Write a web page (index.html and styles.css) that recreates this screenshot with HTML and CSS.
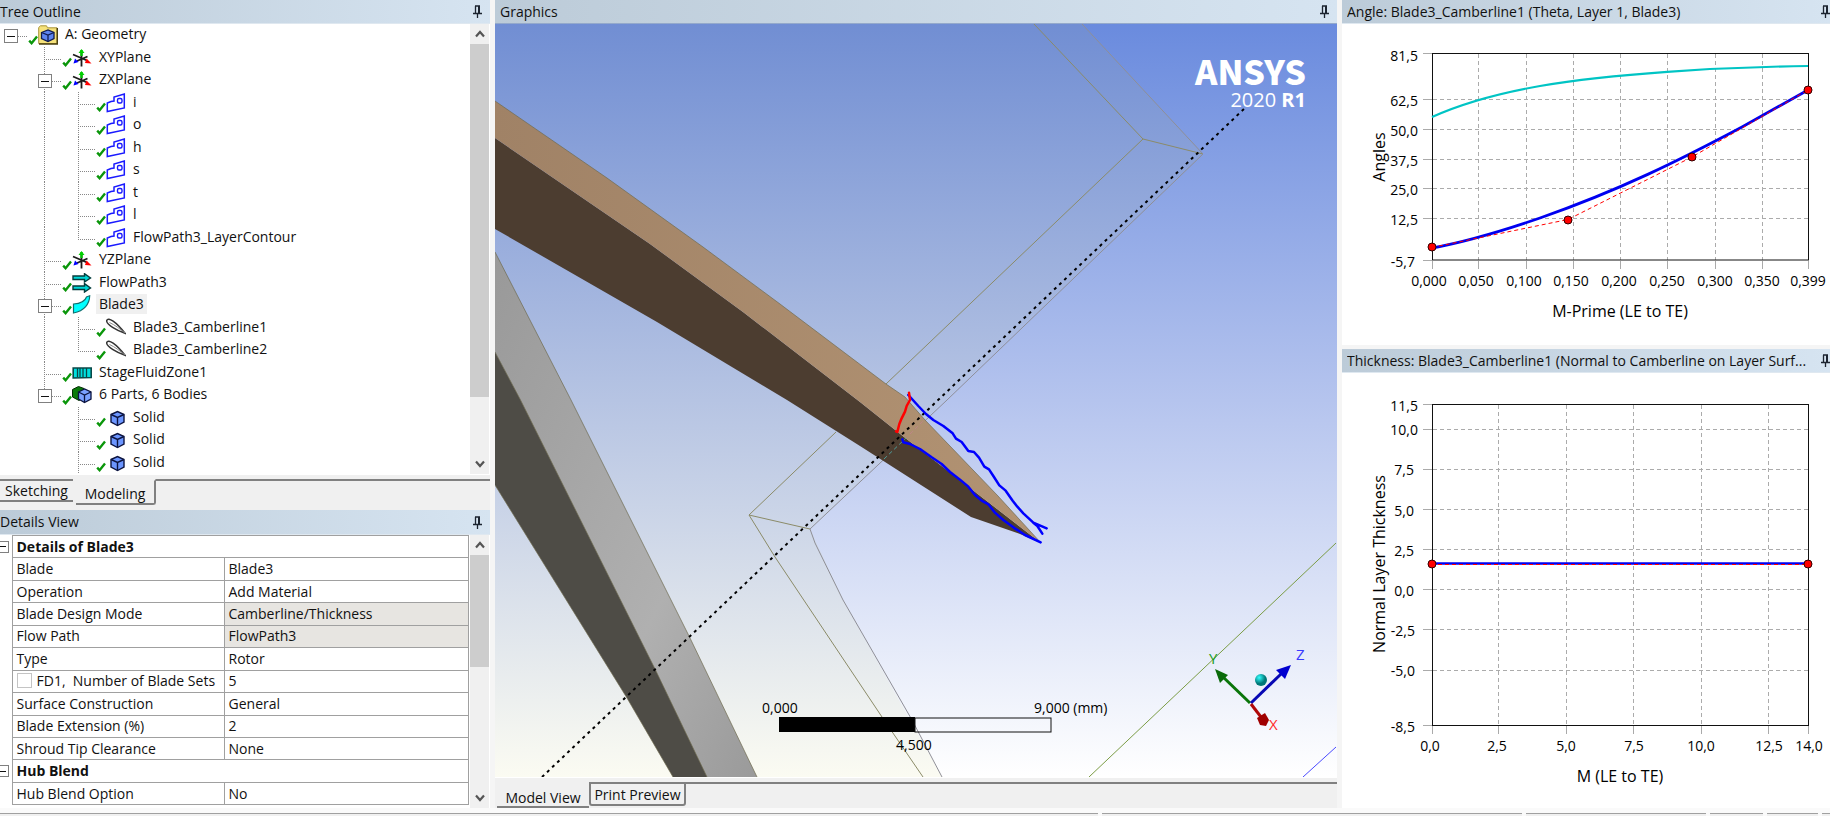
FILE: index.html
```html
<!DOCTYPE html>
<html lang="en">
<head>
<meta charset="utf-8">
<title>A: Geometry - DesignModeler</title>
<link rel="stylesheet" href="styles.css">
</head>
<body>
<svg class="defs" aria-hidden="true">
  <defs>
    <symbol id="check" viewBox="0 0 10 10"><path d="M1.2 5.6 3.6 8.2 9 1.6" fill="none" stroke="#0a960a" stroke-width="2.4"/></symbol>
    <symbol id="pin" viewBox="0 0 9 13"><path d="M2 1h5M2.5 1v7M0 8.5h9M4.5 9v4" fill="none" stroke="#1c2430" stroke-width="1.3"/><path d="M6 1v7" stroke="#1c2430" stroke-width="2"/></symbol>
    <symbol id="up" viewBox="0 0 10 10"><path d="M1 7.500 5 3l4 4.500" fill="none" stroke="#555" stroke-width="2.200"/></symbol>
    <symbol id="down" viewBox="0 0 10 10"><path d="M1 2.500 5 7l4-4.500" fill="none" stroke="#555" stroke-width="2.200"/></symbol>
    <symbol id="geometry" viewBox="0 0 20 20"><path d="M.700 18.500V2.500L2.500.8h6l1 2h9.500v15.700z" fill="#f6e27a" stroke="#a8953a"/><path d="M1 19h18.300V3" fill="none" stroke="#4b4010" stroke-width="1.400"/><path d="M3.500 7.500 10 5l6 2.500v6l-6 3-6.500-3z" fill="#5c84f0" stroke="#101c50" stroke-width="1.300"/><path d="M3.500 7.500 10 10l6-2.500M10 10v6.500" fill="none" stroke="#101c50" stroke-width="1.300"/></symbol>
    <symbol id="plane" viewBox="0 0 20 20"><path d="M9.500 5v13.500M1 6.500l14 6M15.500 8.500 5 13" stroke="#1c1c1c" stroke-width="1.800" fill="none"/><path d="M9.500 2v6" stroke="#00c800" stroke-width="2.400"/><path d="M6.500 5 9.500 1l3 4z" fill="#00d000"/><path d="m14.500 10.500 5 5-6.500-.5z" fill="#f00"/><path d="m1.500 15.500 1.500-5 3.500 3.500z" fill="#00f"/></symbol>
    <symbol id="sketch" viewBox="0 0 20 20"><path d="M1.300 18.500V10L5 8.500 8 8V4L18.300 1v14z" fill="#fff" stroke="#1a1aff" stroke-width="1.500"/><rect x="11.500" y="5.500" width="4.500" height="4.500" rx="1.500" fill="none" stroke="#1a1aff" stroke-width="1.400"/></symbol>
    <symbol id="flow" viewBox="0 0 20 20"><path d="M1 3h11.500V.7L18.500 5l-6 4V6.500H1zM1 13h11.500v-2.300l6 4.300-6 4v-2.500H1z" fill="#00d8d8" stroke="#063c3c" stroke-width="1.400"/></symbol>
    <symbol id="blade" viewBox="0 0 20 20"><path d="M1.500 18V9C9 8.500 13 6.500 14.500 2L17.700.8c-.2 8-5.200 15.200-16.200 17.200z" fill="#0ff" stroke="#107070" stroke-width="1.200"/></symbol>
    <symbol id="camber" viewBox="0 0 20 20"><path d="M.7 2.500c1.500-4 9.500 1.500 18.300 12.800C11 12.500 0 6.500.7 2.500z" fill="#fff" stroke="#333" stroke-width="1.500"/><path d="M3.500 4.500C9 7 14 11 19 15" fill="none" stroke="#888" stroke-width="1"/></symbol>
    <symbol id="fluid" viewBox="0 0 20 20"><path d="M1.200 5h18v9.500l-18 .5z" fill="#00dede" stroke="#084848" stroke-width="1.600"/><path d="M5.500 5v9M8 5v9M11 5v9M14.500 5v9" stroke="#084848" stroke-width="1.300"/></symbol>
    <symbol id="parts" viewBox="0 0 20 20"><path d="M.5 4.500 6.500 1.500 12 3.500v9l-5 3-6.500-3.500z" fill="#0a7a0a" stroke="#022c02"/><path d="m6.500 7 6-3 6.500 3v7l-6.500 3.500-6-3.500z" fill="#7aa0ff" stroke="#0c1440" stroke-width="1.300"/><path d="m6.500 7 6 3 6.500-3M12.500 10v7" fill="none" stroke="#0c1440" stroke-width="1.300"/></symbol>
    <symbol id="solid" viewBox="0 0 20 20"><path d="m5 6.500 6.500-3L18 6.500v7.500l-6.500 3.500L5 14z" fill="#6c96ff" stroke="#0c1440" stroke-width="1.400"/><path d="m5 6.500 6.500 3L18 6.500M11.500 9.500v8" fill="none" stroke="#0c1440" stroke-width="1.400"/></symbol>
  </defs>
</svg>

<div class="app">
  <main class="workspace">
    <div class="side">
      <section class="pane pane-tree">
        <header class="bar"><h2>Tree Outline</h2><button class="pin" aria-label="Pin Tree Outline"><svg><use href="#pin"/></svg></button></header>
        <div class="scroller">
          <ul class="tree">
            <li><span class="node root"><button class="toggle" aria-label="Collapse A: Geometry"></button></span><svg class="ok"><use href="#check"/></svg><svg class="icon"><use href="#geometry"/></svg><span class="label">A: Geometry</span></li>
            <li><span class="step"></span><span class="node"></span><svg class="ok"><use href="#check"/></svg><svg class="icon"><use href="#plane"/></svg><span class="label">XYPlane</span></li>
            <li><span class="step"></span><span class="node"><button class="toggle" aria-label="Collapse ZXPlane"></button></span><svg class="ok"><use href="#check"/></svg><svg class="icon"><use href="#plane"/></svg><span class="label">ZXPlane</span></li>
            <li><span class="step"></span><span class="step line"></span><span class="node"></span><svg class="ok"><use href="#check"/></svg><svg class="icon"><use href="#sketch"/></svg><span class="label">i</span></li>
            <li><span class="step"></span><span class="step line"></span><span class="node"></span><svg class="ok"><use href="#check"/></svg><svg class="icon"><use href="#sketch"/></svg><span class="label">o</span></li>
            <li><span class="step"></span><span class="step line"></span><span class="node"></span><svg class="ok"><use href="#check"/></svg><svg class="icon"><use href="#sketch"/></svg><span class="label">h</span></li>
            <li><span class="step"></span><span class="step line"></span><span class="node"></span><svg class="ok"><use href="#check"/></svg><svg class="icon"><use href="#sketch"/></svg><span class="label">s</span></li>
            <li><span class="step"></span><span class="step line"></span><span class="node"></span><svg class="ok"><use href="#check"/></svg><svg class="icon"><use href="#sketch"/></svg><span class="label">t</span></li>
            <li><span class="step"></span><span class="step line"></span><span class="node"></span><svg class="ok"><use href="#check"/></svg><svg class="icon"><use href="#sketch"/></svg><span class="label">l</span></li>
            <li><span class="step"></span><span class="step line"></span><span class="node last"></span><svg class="ok"><use href="#check"/></svg><svg class="icon"><use href="#sketch"/></svg><span class="label">FlowPath3_LayerContour</span></li>
            <li><span class="step"></span><span class="node"></span><svg class="ok"><use href="#check"/></svg><svg class="icon"><use href="#plane"/></svg><span class="label">YZPlane</span></li>
            <li><span class="step"></span><span class="node"></span><svg class="ok"><use href="#check"/></svg><svg class="icon"><use href="#flow"/></svg><span class="label">FlowPath3</span></li>
            <li><span class="step"></span><span class="node"><button class="toggle" aria-label="Collapse Blade3"></button></span><svg class="ok"><use href="#check"/></svg><svg class="icon"><use href="#blade"/></svg><span class="label selected">Blade3</span></li>
            <li><span class="step"></span><span class="step line"></span><span class="node"></span><svg class="ok"><use href="#check"/></svg><svg class="icon"><use href="#camber"/></svg><span class="label">Blade3_Camberline1</span></li>
            <li><span class="step"></span><span class="step line"></span><span class="node last"></span><svg class="ok"><use href="#check"/></svg><svg class="icon"><use href="#camber"/></svg><span class="label">Blade3_Camberline2</span></li>
            <li><span class="step"></span><span class="node"></span><svg class="ok"><use href="#check"/></svg><svg class="icon"><use href="#fluid"/></svg><span class="label">StageFluidZone1</span></li>
            <li><span class="step"></span><span class="node last"><button class="toggle" aria-label="Collapse 6 Parts, 6 Bodies"></button></span><svg class="ok"><use href="#check"/></svg><svg class="icon"><use href="#parts"/></svg><span class="label">6 Parts, 6 Bodies</span></li>
            <li><span class="step"></span><span class="step"></span><span class="node"></span><svg class="ok"><use href="#check"/></svg><svg class="icon"><use href="#solid"/></svg><span class="label">Solid</span></li>
            <li><span class="step"></span><span class="step"></span><span class="node"></span><svg class="ok"><use href="#check"/></svg><svg class="icon"><use href="#solid"/></svg><span class="label">Solid</span></li>
            <li><span class="step"></span><span class="step"></span><span class="node"></span><svg class="ok"><use href="#check"/></svg><svg class="icon"><use href="#solid"/></svg><span class="label">Solid</span></li>
          </ul>
          <div class="scrollbar"><button aria-label="Scroll up"><svg><use href="#up"/></svg></button><div class="track"><div class="thumb tree-thumb"></div></div><button aria-label="Scroll down"><svg><use href="#down"/></svg></button></div>
        </div>
      </section>
      <nav class="tabs side-tabs"><button class="tab">Sketching</button><button class="tab active">Modeling</button><span class="rule"></span></nav>
      <section class="pane pane-details">
        <header class="bar"><h2>Details View</h2><button class="pin" aria-label="Pin Details View"><svg><use href="#pin"/></svg></button></header>
        <div class="scroller">
          <table class="details">
            <colgroup><col class="c-gutter"><col class="c-name"><col></colgroup>
            <tbody>
              <tr><td class="gutter"><button class="fold" aria-label="Collapse Details of Blade3"></button></td><th colspan="2">Details of Blade3</th></tr>
              <tr><td class="gutter"></td><td>Blade</td><td>Blade3</td></tr>
              <tr><td class="gutter"></td><td>Operation</td><td>Add Material</td></tr>
              <tr><td class="gutter"></td><td>Blade Design Mode</td><td class="locked">Camberline/Thickness</td></tr>
              <tr><td class="gutter"></td><td>Flow Path</td><td class="locked">FlowPath3</td></tr>
              <tr><td class="gutter"></td><td>Type</td><td>Rotor</td></tr>
              <tr><td class="gutter"></td><td><label class="param"><input type="checkbox">FD1,&nbsp; Number of Blade Sets</label></td><td>5</td></tr>
              <tr><td class="gutter"></td><td>Surface Construction</td><td>General</td></tr>
              <tr><td class="gutter"></td><td>Blade Extension (%)</td><td>2</td></tr>
              <tr><td class="gutter"></td><td>Shroud Tip Clearance</td><td>None</td></tr>
              <tr><td class="gutter"><button class="fold" aria-label="Collapse Hub Blend"></button></td><th colspan="2">Hub Blend</th></tr>
              <tr><td class="gutter"></td><td>Hub Blend Option</td><td>No</td></tr>
            </tbody>
          </table>
          <div class="scrollbar"><button aria-label="Scroll up"><svg><use href="#up"/></svg></button><div class="track"><div class="thumb details-thumb"></div></div><button aria-label="Scroll down"><svg><use href="#down"/></svg></button></div>
        </div>
      </section>
    </div>

    <section class="pane center">
      <header class="bar bar-view"><h2>Graphics</h2><button class="pin" aria-label="Pin Graphics"><svg><use href="#pin"/></svg></button></header>
      <div class="view">
        <svg class="scene" viewBox="495 24 842 753" preserveAspectRatio="xMinYMin slice" role="img" aria-label="Blade model">
          <defs>
            <linearGradient id="sky" x1="0" y1="24" x2="0" y2="777" gradientUnits="userSpaceOnUse"><stop offset="0" stop-color="#6a8bde"/><stop offset=".5" stop-color="#b5c4ee"/><stop offset="1" stop-color="#fff"/></linearGradient>
            <linearGradient id="haze" x1="0" y1="24" x2="0" y2="777" gradientUnits="userSpaceOnUse"><stop offset="0" stop-color="#718ed3"/><stop offset=".5" stop-color="#b6c4e3"/><stop offset="1" stop-color="#fbfbf2"/></linearGradient>
            <linearGradient id="tan"><stop offset="0" stop-color="#a08266"/><stop offset="1" stop-color="#b29373"/></linearGradient>
            <linearGradient id="steel" x1="0" y1="0" x2="1" y2="1"><stop offset="0" stop-color="#999"/><stop offset=".65" stop-color="#b0b0b0"/><stop offset="1" stop-color="#9a9a9a"/></linearGradient>
            <radialGradient id="ball" cx=".35" cy=".3"><stop offset="0" stop-color="#3ff"/><stop offset="1" stop-color="#077"/></radialGradient>
          </defs>
          <rect x="495" y="24" width="842" height="753" fill="url(#sky)"/>
          <path d="M495 24h587l121 130L810 529l33 71 99 177H495z" fill="url(#haze)"/>
          <path d="M495 252 571 400 690 638 757 777H700L520 400 495 352z" fill="url(#steel)"/>
          <path d="M495 352 520.500 400 568 495 655 669 707 777H673L627 698 495 485z" fill="#4e4c46"/>
          <path d="M495 252 571 400 690 638 757 777M495 352 520.500 400 568 495 655 669 707 777M495 485 627 698 673 777" class="edge"/>
          <g class="wire">
            <path d="M1034 24 1143 139 886 384M836 432 749 515 810 529M1143 139 1203 154M749 515 775 557 882 717 923 777"/>
            <path class="faint" d="M1082 24 1203 154 947 400 810 529 815 543 843 600 912 720 942 777"/>
          </g>
          <path d="M495 138 650 244 743 312 860 402 904 437 970 488 1041 543 1020 534 971 517 860 446 787 400 657 322 495 229z" fill="#4c3d30"/>
          <path d="M495 101 607 178 703 247 780 304 886 384 905 397 925 420 998 496 1041 543 970 488 904 437 860 402 743 312 650 244 495 138z" fill="url(#tan)"/>
          <path d="M495 101 607 178 703 247 780 304 886 384 905 397 925 420 998 496 1041 543" class="edge"/>
          <path d="M884 459 906 438" class="hidden-edge"/><path d="M910 434 924 420" class="hidden-tan"/>
          <path d="M542 777 1246 107" class="axis"/>
          <g transform="translate(860 370) scale(.33333)" fill="none" stroke-width="7.500" stroke-linecap="round" stroke-linejoin="round">
            <path stroke="#00f" d="M145 75 175 108 198 132 220 150 250 168 278 190 288 206 305 216 325 243 342 246 357 263 373 290 387 298 400 318 418 346 437 362 458 392 472 410 490 430 520 458 560 475M520 458 532 468 547 491"/>
            <path stroke="#00f" d="M127 208 130 217 150 222 180 237 215 262 245 282 270 306 300 329 325 350 345 375 365 392 385 403 405 428 430 450 460 472 495 495 542 517"/>
            <path stroke="#f00" d="M147 68 150 90 140 108 135 125 125 145 118 162 112 186 108 184"/>
          </g>
          <path d="M1336 543 1089 777" stroke="#7b9c45" fill="none"/>
          <path d="M1336 747 1303 777" stroke="#4a4aff" fill="none"/>
          <rect x="779" y="717" width="136" height="15"/>
          <rect x="915" y="718" width="136" height="14" fill="none" stroke="#111"/>
          <text x="762" y="713" class="scale">0,000</text>
          <text x="1034" y="713" class="scale">9,000 (mm)</text>
          <text x="896" y="750" class="scale">4,500</text>
          <path d="M1250 703 1222 676" stroke="#0a750a" stroke-width="3"/><path d="m1215 669 13 6-8 8z" fill="#0a6a0a"/>
          <path d="m1251 703 30-29" stroke="#0808b4" stroke-width="3"/><path d="m1291 665-6 14-9-9z" fill="#0000d0"/>
          <path d="m1251 704 10 13" stroke="#b00808" stroke-width="3"/><path d="m1257 718 8-5 4 7-3 6-6-1z" fill="#a00000"/>
          <circle cx="1261" cy="680" r="6" fill="url(#ball)"/>
          <text x="1209" y="664" class="triad" fill="#1a9c1a">Y</text>
          <text x="1296" y="660" class="triad" fill="#3a3aff">Z</text>
          <text x="1269" y="730" class="triad" fill="#ff2a2a">X</text>
          <text x="1306" y="85" class="brand">ANSYS</text>
          <text x="1306" y="107" class="release">2020 <tspan class="strong">R1</tspan></text>
        </svg>
      </div>
      <nav class="tabs view-tabs"><button class="tab active">Model View</button><button class="tab boxed">Print Preview</button><span class="rule"></span></nav>
    </section>

    <div class="charts">
      <section class="pane">
        <header class="bar"><h2>Angle: Blade3_Camberline1 (Theta, Layer 1, Blade3)</h2><button class="pin" aria-label="Pin Angle"><svg><use href="#pin"/></svg></button></header>
        <svg class="chart" viewBox="1342 24 488 321" role="img" aria-label="Angles against M-Prime">
          <path class="grid" d="M1478.500 54v206M1526.500 54v206M1573.500 54v206M1620.500 54v206M1667.500 54v206M1715.500 54v206M1762.500 54v206M1433 99.500h375M1433 129.500h375M1433 159.500h375M1433 188.500h375M1433 218.500h375"/>
          <path class="tick" d="M1423 53.500h9M1423 99.500h9M1423 129.500h9M1423 159.500h9M1423 188.500h9M1423 218.500h9M1423 260.500h9M1432.500 261v8M1478.500 261v8M1526.500 261v8M1573.500 261v8M1620.500 261v8M1667.500 261v8M1715.500 261v8M1762.500 261v8M1808.500 261v8"/>
          <rect class="frame" x="1432.500" y="53.500" width="376" height="206.500"/>
          <path d="M1432 117C1461 104 1500 93 1540 86 1610 74 1720 67 1808 66" fill="none" stroke="#00c4c4" stroke-width="2.200"/>
          <path d="M1432 248C1465 242 1505 230 1540 218 1620 190 1680 160 1742 127L1808 90" fill="none" stroke="#0000f0" stroke-width="2.800"/>
          <path class="control" d="M1432 247.500 1568 219.500 1692 157 1808 90"/>
          <g class="handle"><circle cx="1432" cy="247" r="4"/><circle cx="1568" cy="220" r="4"/><circle cx="1692" cy="157" r="4"/><circle cx="1808" cy="90" r="4"/></g>
          <g class="num end"><text x="1418" y="61">81,5</text><text x="1418" y="106">62,5</text><text x="1418" y="136">50,0</text><text x="1418" y="166">37,5</text><text x="1418" y="195">25,0</text><text x="1418" y="225">12,5</text><text x="1415" y="267">-5,7</text></g>
          <g class="num mid"><text x="1429" y="286">0,000</text><text x="1476" y="286">0,050</text><text x="1524" y="286">0,100</text><text x="1571" y="286">0,150</text><text x="1619" y="286">0,200</text><text x="1667" y="286">0,250</text><text x="1715" y="286">0,300</text><text x="1762" y="286">0,350</text><text x="1808" y="286">0,399</text></g>
          <text class="axis-title" x="1620" y="317">M-Prime (LE to TE)</text>
          <text class="axis-title" transform="translate(1385 157) rotate(-90)">Angles</text>
        </svg>
      </section>
      <section class="pane">
        <header class="bar"><h2>Thickness: Blade3_Camberline1 (Normal to Camberline on Layer Surf...</h2><button class="pin" aria-label="Pin Thickness"><svg><use href="#pin"/></svg></button></header>
        <svg class="chart" viewBox="1342 373 488 435" role="img" aria-label="Normal layer thickness against M">
          <path class="grid" d="M1498.500 405v320M1566.500 405v320M1633.500 405v320M1701.500 405v320M1768.500 405v320M1433 429.500h375M1433 469.500h375M1433 509.500h375M1433 549.500h375M1433 589.500h375M1433 629.500h375M1433 670.500h375"/>
          <path class="tick" d="M1423 404.500h9M1423 429.500h9M1423 469.500h9M1423 509.500h9M1423 549.500h9M1423 589.500h9M1423 629.500h9M1423 670.500h9M1423 725.500h9M1432.500 726v8M1498.500 726v8M1566.500 726v8M1633.500 726v8M1701.500 726v8M1768.500 726v8M1808.500 726v8"/>
          <rect class="frame" x="1432.500" y="404.500" width="376" height="321"/>
          <path d="M1432 563.500h376" stroke="#0000f0" stroke-width="2.600"/>
          <path class="control" d="M1438 564.500h366"/>
          <g class="handle"><circle cx="1432" cy="564" r="4"/><circle cx="1808" cy="564" r="4"/></g>
          <g class="num end"><text x="1418" y="411">11,5</text><text x="1418" y="435">10,0</text><text x="1414" y="475">7,5</text><text x="1414" y="516">5,0</text><text x="1414" y="556">2,5</text><text x="1414" y="596">0,0</text><text x="1415" y="636">-2,5</text><text x="1415" y="676">-5,0</text><text x="1415" y="732">-8,5</text></g>
          <g class="num mid"><text x="1430" y="751">0,0</text><text x="1497" y="751">2,5</text><text x="1566" y="751">5,0</text><text x="1634" y="751">7,5</text><text x="1701" y="751">10,0</text><text x="1769" y="751">12,5</text><text x="1809" y="751">14,0</text></g>
          <text class="axis-title" x="1620" y="782">M (LE to TE)</text>
          <text class="axis-title" transform="translate(1385 564) rotate(-90)">Normal Layer Thickness</text>
        </svg>
      </section>
    </div>
  </main>
  <footer class="status"><span></span><span></span><span></span><span></span><span></span><span></span></footer>
</div>
</body>
</html>
```
FILE: styles.css
```css
* { box-sizing: border-box; }
html, body { height: 100%; margin: 0; }
body { background: #f0f0f0; color: #111; font: 14px/20px "Open Sans", "Noto Sans", sans-serif; overflow: hidden; }
button { margin: 0; padding: 0; border: 0; background: none; color: inherit; font: inherit; }
.defs { position: absolute; width: 0; height: 0; }

.app { display: grid; grid-template-rows: minmax(0, 1fr) 8px; height: 100vh; }
.workspace { display: grid; grid-template-columns: minmax(0, 490fr) minmax(0, 842fr) minmax(0, 488fr); gap: 5px; min-height: 0; background: #f5f5f5; }
.side { display: grid; grid-template-rows: minmax(0, 474fr) 36px minmax(0, 298fr); min-height: 0; }
.pane { display: flex; flex-direction: column; min-width: 0; min-height: 0; background: #fff; }

.bar { display: flex; flex: none; align-items: center; gap: 8px; height: 24px; padding-right: 8px; background: linear-gradient(90deg, #bccbd8, #d6e4f1); border-bottom: 1px solid #dfe8f0; }
.bar h2 { flex: 1; min-width: 0; margin: 0; overflow: hidden; font-size: 14px; font-weight: 400; line-height: 22px; text-overflow: ellipsis; white-space: nowrap; }
.bar-view { border-bottom-color: #94a9cb; }
.center .bar, .charts .bar { padding-left: 5px; }
.charts .bar { padding-right: 0; }
.pin { display: flex; flex: none; }
.pin svg { width: 9px; height: 13px; }

.scroller { display: flex; flex: 1; min-height: 0; padding-right: 1px; }
.tree { display: grid; flex: 1; grid-auto-rows: minmax(0, 1fr); min-width: 0; margin: 0; padding: 0; list-style: none; }
.tree li { display: flex; align-items: center; min-height: 0; }
.step, .node { flex: none; align-self: stretch; width: 34px; background-repeat: no-repeat; }
.line { background-image: repeating-linear-gradient(#888 0 1px, #fff 1px 2px); background-position: 10px 0; background-size: 1px 100%; }
.node { display: flex; align-items: center; width: 28px; padding-left: 4px; background-image: repeating-linear-gradient(#888 0 1px, #fff 1px 2px), repeating-linear-gradient(90deg, #888 0 1px, #fff 1px 2px); background-position: 10px 0, 10px 12px; background-size: 1px 100%, 18px 1px; }
.node.last { background-size: 1px 13px, 18px 1px; }
.node.root { background-size: 0 0, 18px 1px; }
.toggle, .fold { display: block; width: 14px; height: 14px; border: 1px solid #808080; background: linear-gradient(#111, #111) center / 8px 1px no-repeat #fff; }
.toggle { margin-top: 2px; }
.ok { flex: none; align-self: flex-end; width: 10px; height: 10px; margin-bottom: 2px; }
.icon { flex: none; width: 20px; height: 20px; }
.label { margin: 0 0 2px 4px; padding: 0 3px; line-height: 20px; white-space: nowrap; }
.selected { background: #f0f0f0; }

.scrollbar { display: flex; flex: none; flex-direction: column; width: 19px; background: #f0f0f0; }
.scrollbar button { display: flex; flex: none; align-items: center; justify-content: center; height: 20px; }
.scrollbar svg { width: 10px; height: 10px; }
.track { flex: 1; min-height: 0; }
.thumb { background: #cdcdcd; }
.tree-thumb { height: 86%; }
.details-thumb { height: 48%; }

.tabs { display: flex; align-items: flex-start; background: #f0f0f0; }
.tab { flex: none; }
.rule { flex: 1; border-top: 2px solid #808080; }
.side-tabs { padding-top: 4px; border-top: 1px solid #fff; }
.side-tabs .tab { height: 23px; width: 73px; margin-right: 3px; border-top: 2px solid #808080; border-bottom: 2px solid #808080; }
.side-tabs .tab.active { width: 80px; height: 26px; margin-right: 0; padding-top: 3px; border-top-color: #f0f0f0; border-right: 2px solid #808080; border-bottom-right-radius: 3px; }

.pane-details .bar { height: 25px; }
.details { flex: 1; align-self: flex-start; height: 99%; margin-right: 1px; border-collapse: collapse; table-layout: fixed; }
.c-gutter { width: 12px; }
.c-name { width: 212px; }
.details td, .details th { height: 20px; padding: 0 4px 1px; overflow: hidden; border: 1px solid #a0a0a0; font-weight: 400; line-height: 19px; text-align: left; white-space: nowrap; }
.details th { font-weight: 700; }
.details .gutter { padding: 0; border-width: 0 1px 0 0; }
.fold { width: 9px; height: 12px; border-left: 0; background-size: 6px 1px; background-position: left center; }
.details .locked { background: #e7e5e1; }
.param { display: flex; align-items: center; gap: 5px; }
.param input { width: 15px; height: 15px; margin: 0; appearance: none; border: 1px solid #c4c4c4; background: #fff; }

.view { flex: 1; min-height: 0; overflow: hidden; }
.scene { display: block; width: 100%; height: 100%; }
.scene .edge { fill: none; stroke: #6f6b50; stroke-opacity: .7; }
.wire { fill: none; stroke: #8b8b68; }
.wire .faint { stroke: #8f8f96; }
.hidden-edge { stroke: #4f9c9a; stroke-dasharray: 4 3; }
.hidden-tan { stroke: #bd8686; stroke-dasharray: 4 3; }
.axis { fill: none; stroke: #000; stroke-width: 2; stroke-dasharray: 3 4; }
.scale { font-size: 14px; }
.triad { font: 15px "Open Sans", sans-serif; }
.brand { fill: #fff; font: 900 34px "Noto Sans CJK SC", "Open Sans", sans-serif; text-anchor: end; }
.release { fill: #fff; font: 20px "Open Sans", sans-serif; text-anchor: end; }
.strong { font-weight: 700; }
.view-tabs { flex: none; height: 31px; padding: 4px 0 0 2px; border-top: 1px solid #fff; }
.view-tabs .tab { height: 26px; width: 92px; padding-top: 6px; border-bottom: 2px solid #808080; }
.view-tabs .tab.boxed { width: 97px; height: 24px; padding-top: 2px; border: 2px solid #808080; border-radius: 0 0 3px 3px; line-height: 18px; }

.charts { display: grid; grid-template-rows: minmax(0, 345fr) minmax(0, 459fr); gap: 4px; min-height: 0; min-width: 0; }
.chart { display: block; flex: 1; width: 100%; min-height: 0; }
.grid { fill: none; stroke: #ababab; stroke-dasharray: 4 3; }
.tick { fill: none; stroke: #aaa; }
.frame { fill: none; stroke: #111; }
.control { fill: none; stroke: #f00; stroke-dasharray: 4 3; }
.handle { fill: #f00; stroke: #300; }
.num { font-size: 14px; }
.end { text-anchor: end; }
.mid { text-anchor: middle; }
.axis-title { font-size: 16px; text-anchor: middle; }

.status { display: grid; grid-template-columns: 1099fr 420fr 180fr 53fr 51fr 8fr; gap: 4px; padding-top: 5px; background: #fafafa; }
.status span { border-top: 1px solid #a0a0a0; background: #f0f0f0; }
```
